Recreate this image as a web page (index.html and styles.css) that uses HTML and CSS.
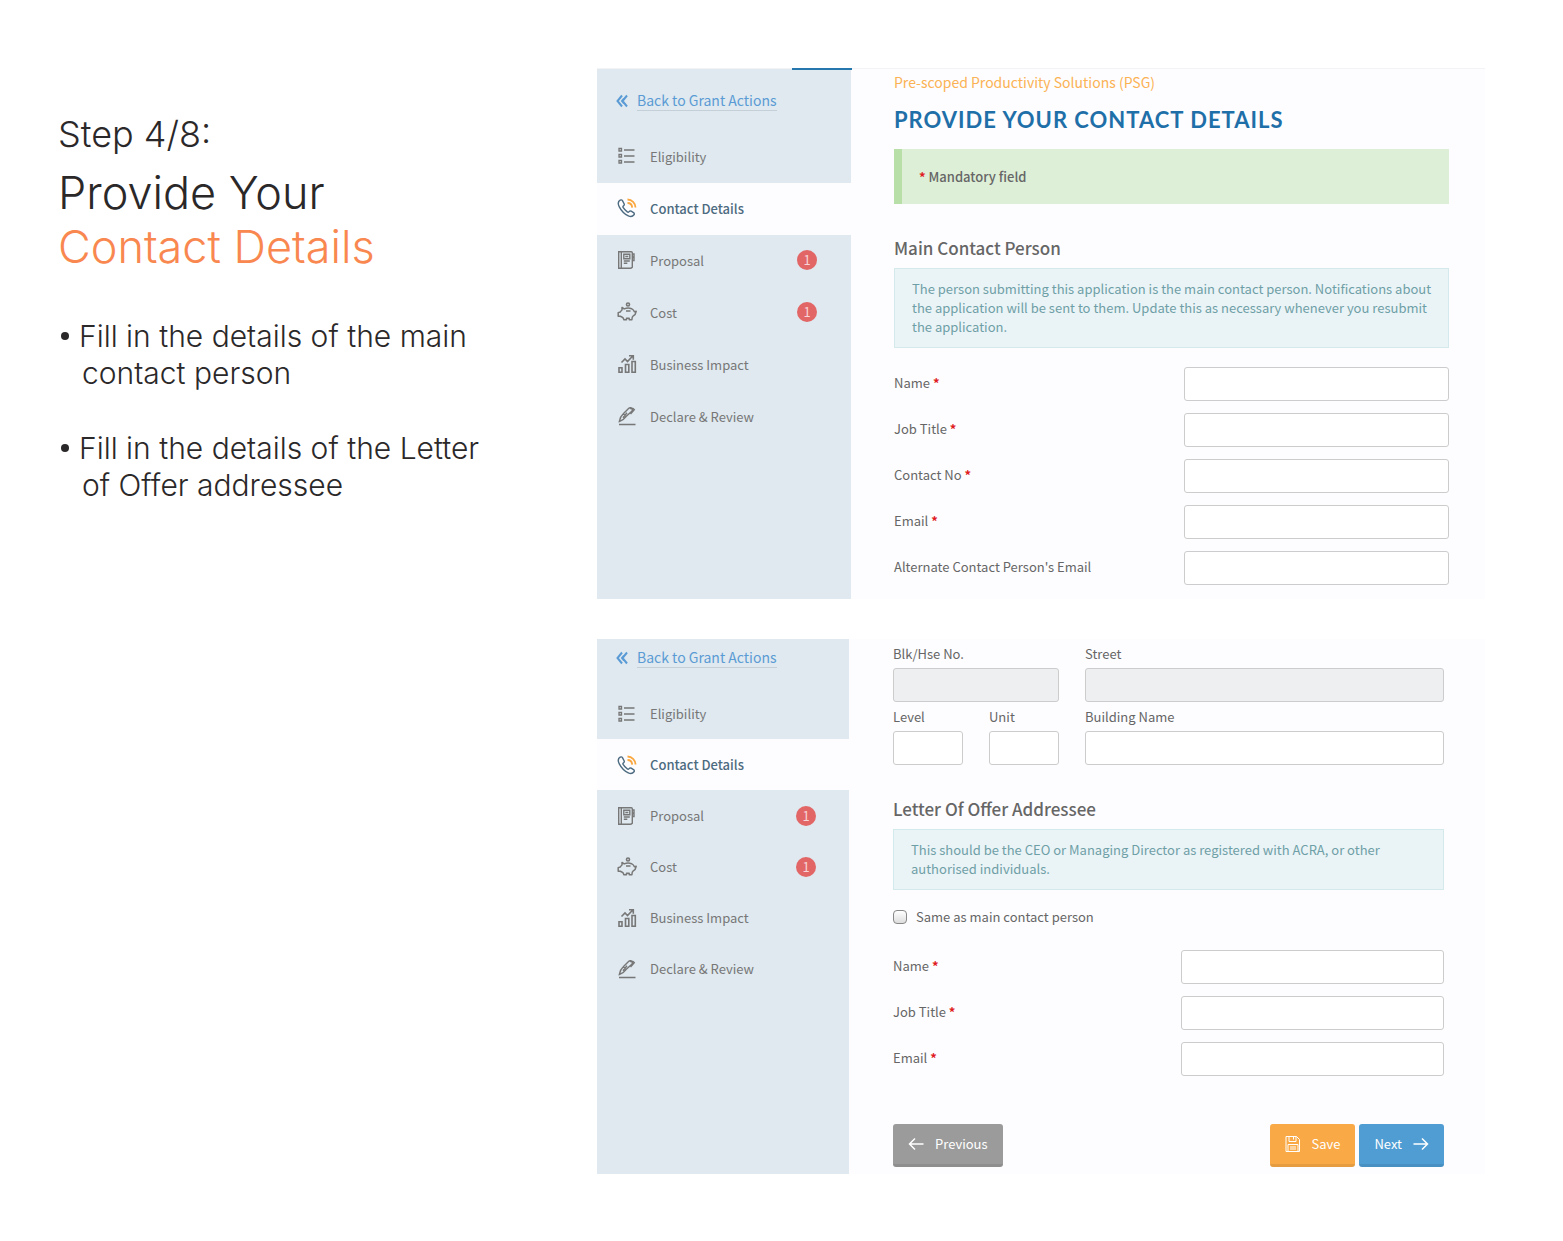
FILE: index.html
```html
<!DOCTYPE html>
<html lang="en">

<head>
    <title>Step 4/8: Provide Your Contact Details</title>
    <meta charset="utf-8">
    <meta name="viewport" content="width=device-width, initial-scale=1.0">

    <link rel="stylesheet" href="styles.css">
</head>

<body>

    <!-- icons shared by both menus -->
    <svg class="sprite" aria-hidden="true">
        <symbol id="icon-back" viewBox="0 0 12 14">
            <path d="M6 1.500L1.500 7L6 12.500M11 1.500L6.500 7L11 12.500M8 4.500L6 7L8 9.500" fill="none" stroke="currentColor" stroke-width="2" />
        </symbol>
        <symbol id="icon-list" viewBox="0 0 20 20">
            <path d="M2 2.500h2.500v2.500h-2.500zM2 8.500h2.500v2.500h-2.500zM2 14.500h2.500v2.500h-2.500zM7 4h10.500M7 10h10.500M7 16h10.500" fill="none" stroke="currentColor" stroke-width="1.300" />
        </symbol>
        <symbol id="icon-phone" viewBox="0 0 20 20">
            <path d="M3.200 2.200C1 3.500 .8 6 2.300 8.800C4.300 12.700 7.500 16 11.300 17.800C13.500 18.800 15.600 18.600 17 16.800C17.600 16 17.300 15.200 16.500 14.700L14.200 13.200C13.300 12.700 12.700 12.900 12.100 13.600C11.600 14.200 11 14.400 10.300 13.900C8.500 12.700 7.200 11.200 6.100 9.400C5.700 8.700 5.900 8.200 6.500 7.800C7.400 7.200 7.500 6.600 7.100 5.800L5.600 2.900C5 1.900 4.200 1.600 3.200 2.200Z" fill="none" stroke="#4d6b80" stroke-width="1.400" />
            <path d="M10.500 1.500C15 1.500 18.300 5 18.500 9.500M10.500 5C13 5 15 6.900 15.200 9.600" fill="none" stroke="#f9a73e" stroke-width="1.800" />
        </symbol>
        <symbol id="icon-proposal" viewBox="0 0 20 20">
            <path d="M1.700 1.700h12.600q1 0 1 1v14.600q-1 1-2 1h-11.600zM4.300 1.700v16.600M6.800 4.300h6v4.500h-6zM8.300 6.500h3M6.800 11h6M6.800 13.300h3.500M15.300 4h1.700v3h-1.700M15.300 7.500h1.700v3h-1.700" fill="none" stroke="currentColor" stroke-width="1.400" />
        </symbol>
        <symbol id="icon-cost" viewBox="0 0 20 20">
            <circle cx="11" cy="2.500" r="1.500" fill="none" stroke="currentColor" stroke-width="1.600" />
            <path d="M5 5.500L7.200 6.900Q11 5.400 14.500 6.700Q16.500 7.700 17.400 9.700L19.200 9.300Q18.700 12.700 16 14.200Q15 14.800 14.900 17.800H12.200V16.300H9.500V17.800H6.800Q6.700 15.800 5.300 15.200L3.300 14.300H1.200V10.600L3.300 10Q4 8.700 5 8ZM9 9h4.500" fill="none" stroke="currentColor" stroke-width="1.500" stroke-linejoin="round" />
        </symbol>
        <symbol id="icon-impact" viewBox="0 0 20 20">
            <path d="M2 13.700h3v4.600h-3zM8.500 10.500h3.300v7.800h-3.300zM15 7.500h3.300v10.800h-3.300zM4.500 8.500L8 5L10.500 7.500L15.500 2.200M12 1.700h4.300v4" fill="none" stroke="currentColor" stroke-width="1.600" />
        </symbol>
        <symbol id="icon-declare" viewBox="0 0 20 20">
            <path d="M2.300 15.500Q3.200 10.500 6.300 7.800L9 10.600Q6.700 14 2.300 15.500ZM6.300 7.800L11.800 2.300Q13.200 1 14.800 2.500Q16 3.800 14.800 5.300L9 10.600M13 2.500Q16 1.500 17.300 3.600L13.500 8M6 11.700L10 6.800M2 18.500h16.500" fill="none" stroke="currentColor" stroke-width="1.400" />
        </symbol>
    </svg>

    <div class="slide">

        <section class="intro">
            <p class="step">Step 4/8:</p>
            <h1>Provide Your <span>Contact Details</span></h1>
            <ul>
                <li>Fill in the details of the main contact person</li>
                <li>Fill in the details of the Letter of Offer addressee</li>
            </ul>
        </section>

        <div class="screens">

            <section class="screen screen-main">
                <nav class="sidebar">
                    <a class="back" href="#"><svg><use href="#icon-back" /></svg><span>Back to Grant Actions</span></a>
                    <a class="item" href="#"><svg><use href="#icon-list" /></svg>Eligibility</a>
                    <a class="item active" href="#"><svg><use href="#icon-phone" /></svg>Contact Details</a>
                    <a class="item" href="#"><svg><use href="#icon-proposal" /></svg>Proposal<span class="badge">1</span></a>
                    <a class="item" href="#"><svg><use href="#icon-cost" /></svg>Cost<span class="badge">1</span></a>
                    <a class="item" href="#"><svg><use href="#icon-impact" /></svg>Business Impact</a>
                    <a class="item" href="#"><svg><use href="#icon-declare" /></svg>Declare &amp; Review</a>
                </nav>

                <form class="content">
                    <p class="grant">Pre-scoped Productivity Solutions (PSG)</p>
                    <h2>PROVIDE YOUR CONTACT DETAILS</h2>
                    <p class="mandatory"><b>*</b> Mandatory field</p>

                    <h3>Main Contact Person</h3>
                    <p class="info">The person submitting this application is the main contact person. Notifications about the application will be sent to them. Update this as necessary whenever you resubmit the application.</p>

                    <div class="fields">
                        <label for="name">Name <b>*</b></label>
                        <input type="text" id="name">
                        <label for="job">Job Title <b>*</b></label>
                        <input type="text" id="job">
                        <label for="contact">Contact No <b>*</b></label>
                        <input type="text" id="contact">
                        <label for="email">Email <b>*</b></label>
                        <input type="email" id="email">
                        <label for="altemail">Alternate Contact Person's Email</label>
                        <input type="email" id="altemail">
                    </div>
                </form>
            </section>

            <section class="screen screen-letter">
                <nav class="sidebar">
                    <a class="back" href="#"><svg><use href="#icon-back" /></svg><span>Back to Grant Actions</span></a>
                    <a class="item" href="#"><svg><use href="#icon-list" /></svg>Eligibility</a>
                    <a class="item active" href="#"><svg><use href="#icon-phone" /></svg>Contact Details</a>
                    <a class="item" href="#"><svg><use href="#icon-proposal" /></svg>Proposal<span class="badge">1</span></a>
                    <a class="item" href="#"><svg><use href="#icon-cost" /></svg>Cost<span class="badge">1</span></a>
                    <a class="item" href="#"><svg><use href="#icon-impact" /></svg>Business Impact</a>
                    <a class="item" href="#"><svg><use href="#icon-declare" /></svg>Declare &amp; Review</a>
                </nav>

                <form class="content">
                    <div class="address">
                        <div class="wide">
                            <label for="block">Blk/Hse No.</label>
                            <input type="text" id="block" disabled>
                        </div>
                        <div>
                            <label for="street">Street</label>
                            <input type="text" id="street" disabled>
                        </div>
                        <div>
                            <label for="level">Level</label>
                            <input type="text" id="level">
                        </div>
                        <div>
                            <label for="unit">Unit</label>
                            <input type="text" id="unit">
                        </div>
                        <div>
                            <label for="building">Building Name</label>
                            <input type="text" id="building">
                        </div>
                    </div>

                    <h3>Letter Of Offer Addressee</h3>
                    <p class="info">This should be the CEO or Managing Director as registered with ACRA, or other authorised individuals.</p>

                    <label class="same"><input type="checkbox"> Same as main contact person</label>

                    <div class="fields">
                        <label for="name2">Name <b>*</b></label>
                        <input type="text" id="name2">
                        <label for="job2">Job Title <b>*</b></label>
                        <input type="text" id="job2">
                        <label for="email2">Email <b>*</b></label>
                        <input type="email" id="email2">
                    </div>

                    <div class="buttons">
                        <button type="button" class="previous">
                            <svg viewBox="0 0 16 16"><path d="M15.500 8H1.500M7 2.500L1.500 8L7 13.500" /></svg>
                            Previous
                        </button>
                        <button type="button" class="save">
                            <svg viewBox="0 0 16 18"><path d="M1 1.500h10.500l3 3v12h-13.500zM4 1.500v5h7v-5M8.500 1.500v3M3 16.500v-7h10v7M5 12h6M5 14h6" /></svg>
                            Save
                        </button>
                        <button type="button" class="next">
                            Next
                            <svg viewBox="0 0 16 16"><path d="M.5 8h14M9 2.500L14.500 8L9 13.500" /></svg>
                        </button>
                    </div>
                </form>
            </section>

        </div>
    </div>

</body>

</html>
```
FILE: styles.css
```css
* {
    box-sizing: border-box;
}

body {
    margin: 0;
    background-color: white;
    color: #666;
    font-family: "Noto Sans CJK SC", "Noto Sans", sans-serif;
    font-size: 13px;
    line-height: 19px;
}

h1,
h2,
h3,
p,
ul {
    margin: 0;
    padding: 0;
    font-weight: inherit;
}

a {
    color: inherit;
    text-decoration: none;
}

.sprite {
    display: none;
}

.slide {
    display: grid;
    grid-template-columns: minmax(0, 539fr) minmax(0, 888fr);
    padding: 68px 78px 67px 58px;
}

/* left text */
.intro {
    padding: 40px 90px 0 0;
    color: #2b2829;
    font-family: Inter, "Open Sans", sans-serif;
    font-weight: 300;
}

.step {
    font-size: 36px;
    line-height: 52px;
}

h1 {
    margin-top: 6px;
    font-size: 45px;
    line-height: 54px;
}

h1 span {
    display: block;
    color: #f98750;
}

.intro ul {
    margin-top: 44px;
    padding-left: 24px;
    list-style: none;
    font-size: 30px;
    line-height: 37px;
}

.intro li {
    margin-bottom: 38px;
    text-indent: -24px;
}

.intro li::before {
    content: "";
    display: inline-block;
    width: 8px;
    height: 8px;
    margin: 0 10px 7px 3px;
    border-radius: 50%;
    background-color: #2b2829;
}

/* screens */
.screens {
    display: grid;
    gap: 40px;
}

.screen {
    position: relative;
    display: grid;
    background-color: #fdfdff;
}

.screen-main {
    grid-template-columns: 254fr 634fr;
    border-top: 1px solid #f2f3f5;
}

.screen-main::before {
    content: "";
    position: absolute;
    top: -1px;
    left: 22%;
    width: 60px;
    height: 2px;
    background-color: #2577ad;
}

.screen-letter {
    grid-template-columns: 252fr 636fr;
}

/* menu */
.sidebar {
    background-color: #dfe9ef;
    color: #777;
}

.back {
    display: flex;
    align-items: center;
    height: 62px;
    padding: 2px 0 0 19px;
    color: #5b9bd5;
    font-size: 14px;
}

.back svg {
    width: 12px;
    height: 14px;
    margin-right: 9px;
}

.back span {
    border-bottom: 1px solid #c5cfd8;
}

.item {
    display: flex;
    align-items: center;
    height: 52px;
    padding: 0 34px 2px 20px;
}

.item svg {
    width: 20px;
    height: 20px;
    margin-right: 13px;
}

.active {
    background-color: #fdfdff;
    color: #4d6b80;
    font-weight: 500;
}

.badge {
    width: 20px;
    height: 20px;
    margin-left: auto;
    border-radius: 50%;
    background-color: #e26666;
    color: #f7d4d6;
    text-align: center;
}

.screen-letter .back {
    height: 49px;
    padding: 0 0 11px 19px;
}

.screen-letter .item {
    height: 51px;
    padding: 0 33px 0 20px;
}

/* forms */
.content {
    padding: 3px 36px 14px 43px;
}

.screen-letter .content {
    padding: 0 41px 7px 44px;
}

.grant {
    color: #fbb254;
    font-size: 14px;
    line-height: 20px;
}

h2 {
    margin: 14px 0 15px;
    color: #1f6fa8;
    font-family: Lato, sans-serif;
    font-size: 22px;
    font-weight: bold;
    letter-spacing: 1px;
    line-height: 28px;
}

.mandatory {
    padding: 18px 17px;
    border-left: 8px solid #b9dfa8;
    background-color: #ddefd7;
    font-weight: 500;
}

.content b {
    color: #e01b22;
}

h3 {
    margin: 30px 0 6px;
    color: #666;
    font-size: 17px;
    font-weight: 500;
    line-height: 28px;
}

.info {
    padding: 10px 8px 11px 17px;
    border: 1px solid #d3e9ec;
    background-color: #eaf4f7;
    color: #6f9fa6;
}

input {
    width: 100%;
    height: 34px;
    border: 1px solid #ccc;
    border-radius: 3px;
    background-color: white;
}

input:disabled {
    background-color: #eeeff1;
}

.fields {
    display: grid;
    grid-template-columns: 290fr 265fr;
    row-gap: 12px;
    margin-top: 19px;
}

.fields label {
    line-height: 32px;
}

.address {
    display: grid;
    grid-template-columns: 70fr 70fr 359fr;
    column-gap: 26px;
}

.address label {
    display: block;
    line-height: 29px;
}

.address input {
    display: block;
}

.wide {
    grid-column: span 2;
}

.same {
    display: flex;
    align-items: center;
    gap: 9px;
    margin: 17px 0 24px;
}

.same input {
    appearance: none;
    width: 14px;
    height: 14px;
    margin: 0;
    border-color: #888;
    border-radius: 4px;
    background-image: linear-gradient(#fff, #ddd);
}

.screen-letter .fields {
    grid-template-columns: 288fr 263fr;
}

.buttons {
    display: flex;
    gap: 4px;
    margin-top: 48px;
}

button {
    display: flex;
    align-items: center;
    gap: 11px;
    height: 43px;
    padding: 0 15px 1px;
    border: 0;
    border-bottom: 3px solid rgba(0, 0, 0, .08);
    border-radius: 3px;
    color: white;
    font-family: inherit;
    font-size: 13px;
}

button svg {
    width: 16px;
    height: 16px;
    fill: none;
    stroke: currentColor;
    stroke-width: 1.5;
}

.previous {
    margin-right: auto;
    background-color: #9b9b9b;
}

.save {
    gap: 10px;
    background-color: #f9a945;
}

.save svg {
    height: 18px;
    stroke-width: 1;
}

.next {
    background-color: #4f9dd3;
}
```
